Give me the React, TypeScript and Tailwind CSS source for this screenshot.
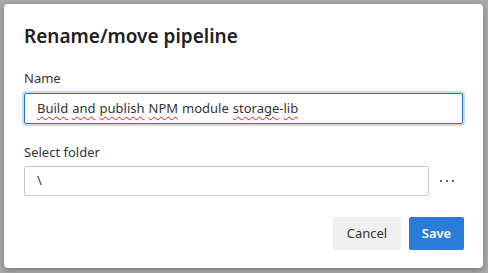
export default function App() {
  const words = [
    { t: 'Build', bad: true },
    { t: 'and', bad: true },
    { t: 'publish', bad: true },
    { t: 'NPM', bad: true },
    { t: 'module', bad: false },
  ]
  const wavy = 'underline decoration-wavy decoration-[#e0141e] decoration-1 underline-offset-[3px]'

  return (
    <div className="w-[488px] h-[273px] bg-[#a9a9a9] pt-1 pl-1" style={{ fontFamily: '"Noto Sans", "Open Sans", sans-serif' }}>
      <div className="w-[479px] h-[264px] bg-white rounded-[4px] shadow-[0_2px_6px_rgba(0,0,0,0.3)] px-5 pt-[18px]">
        <h1 className="text-[19px] leading-[28px] text-[#202020] font-semibold">Rename/move pipeline</h1>

        <div className="mt-[19px] text-[13px] leading-[18px] text-[#333]">Name</div>
        <div className="mt-[6px] w-[439px] h-[31px] border border-[#2b6fc7] rounded-[2px] ring-2 ring-[#c7dcf5] flex items-center pl-3 text-[13px] text-[#333]">
          {words.map((w, i) => (
            <span key={i} className="mr-[4px]">
              <span className={w.bad ? wavy : ''}>{w.t}</span>
            </span>
          ))}
          <span className={wavy}>storage</span>
          <span>-</span>
          <span className={wavy}>lib</span>
        </div>

        <div className="mt-[19px] text-[13px] leading-[18px] text-[#333]">Select folder</div>
        <div className="mt-[5px] flex items-center">
          <div className="w-[405px] h-[30px] border border-[#c8c8c8] rounded-[2px] flex items-center pl-3 text-[13px] text-[#333]">\</div>
          <div className="ml-[11px] flex gap-[4px] items-center">
            <span className="w-[2px] h-[2px] bg-[#666]" />
            <span className="w-[2px] h-[2px] bg-[#666]" />
            <span className="w-[2px] h-[2px] bg-[#666]" />
          </div>
        </div>

        <div className="mt-[21px] flex justify-end gap-2 pr-[0px] w-[440px]">
          <button className="h-[33px] w-[68px] bg-[#efefef] rounded-[2px] text-[13px] text-[#333]">Cancel</button>
          <button className="h-[33px] w-[55px] bg-[#2b7bd9] rounded-[2px] text-[13px] font-semibold text-white">Save</button>
        </div>
      </div>
    </div>
  )
}
